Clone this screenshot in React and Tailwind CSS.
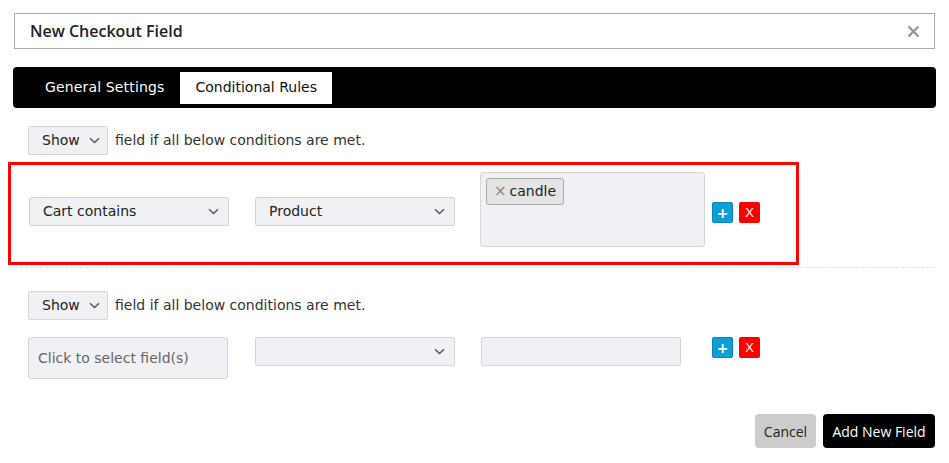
import React from "react";

const dv = "font-['DejaVu_Sans',Verdana,sans-serif]";
const os = "font-['Open_Sans',sans-serif]";

function Chevron() {
  return (
    <svg width="11" height="7" viewBox="0 0 11 7" className="shrink-0">
      <path d="M1 1.2 L5.5 5.5 L10 1.2" fill="none" stroke="#555" strokeWidth="1.5" />
    </svg>
  );
}

function Select({ value, className = "", pad = "pl-[13px] pr-[9px]" }) {
  return (
    <div
      className={`flex items-center justify-between h-[29px] bg-[#f0f1f4] border border-[#d3d5d9] rounded-[2px] text-[14px] text-[#222] ${pad} ${className}`}
    >
      <span>{value}</span>
      <Chevron />
    </div>
  );
}

function RowButtons() {
  return (
    <div className="flex gap-[6px]">
      <button className="w-[21px] h-[21px] rounded-[2px] bg-[#0a9fd6] border border-[#0a82b4] text-white text-[14px] leading-none flex items-center justify-center font-bold">
        +
      </button>
      <button className="w-[21px] h-[21px] rounded-[2px] bg-[#ff0000] text-white text-[13px] leading-none flex items-center justify-center font-['Liberation_Sans',Arial,sans-serif]">
        X
      </button>
    </div>
  );
}

function ShowLine() {
  return (
    <div className="flex items-center gap-[7px] pl-[28px]">
      <Select value="Show" className="w-[80px]" pad="pl-[13px] pr-[7px]" />
      <span className="text-[14px] text-[#333]">field if all below conditions are met.</span>
    </div>
  );
}

export default function App() {
  return (
    <div className={`w-[949px] h-[463px] bg-white ${dv} overflow-hidden`}>
      <div className="mx-[14px] mt-[13px] h-[36px] border border-[#aaa] flex items-center justify-between pl-[15px] pr-[14px]">
        <span className={`${os} text-[16px] font-semibold text-[#222]`}>New Checkout Field</span>
        <svg width="13" height="13" viewBox="0 0 13 13">
          <path d="M1.5 1.5 L11.5 11.5 M11.5 1.5 L1.5 11.5" stroke="#999" strokeWidth="2.4" />
        </svg>
      </div>

      <div className="mx-[13px] mt-[18px] h-[41px] bg-black rounded-[4px] flex items-center pl-[31px] gap-[15px] text-[14px]">
        <div className="text-white px-[1px] tracking-[0.15px]">General Settings</div>
        <div className="bg-white text-[#111] h-[32px] px-[15px] flex items-center">Conditional Rules</div>
      </div>

      <div className="mt-[18px]">
        <ShowLine />
      </div>

      <div className="ml-[8px] mt-[7px] w-[791px] border-[3px] border-[#ff0000] pt-[7px] pb-[15px] pl-[18px] flex items-start">
        <Select value="Cart contains" className="w-[200px] mt-[25px]" />
        <Select value="Product" className="w-[200px] ml-[26px] mt-[25px]" />
        <div className="ml-[25px] w-[225px] h-[75px] bg-[#f0f1f4] border border-[#d3d5d9] rounded-[3px] p-[5px]">
          <div className="inline-flex items-center h-[27px] px-[7px] bg-[#e4e4e4] border border-[#aaa] rounded-[3px] text-[14px] text-[#222]">
            <span className="text-[#888] mr-[3px] text-[15px]">×</span>candle
          </div>
        </div>
        <div className="ml-[7px] mt-[30px]">
          <RowButtons />
        </div>
      </div>

      <div className="mx-[15px] mt-[2px] border-t border-dashed border-[#e2e2e2]" />

      <div className="mt-[23px]">
        <ShowLine />
      </div>

      <div className="mt-[17px] pl-[28px] flex items-start">
        <div className="w-[200px] h-[42px] bg-[#f0f1f4] border border-[#d3d5d9] rounded-[3px] flex items-center pl-[9px] text-[14px] text-[#666]">
          Click to select field(s)
        </div>
        <Select value="" className="w-[200px] ml-[27px]" />
        <div className="w-[200px] h-[29px] ml-[26px] bg-[#f0f1f4] border border-[#d3d5d9] rounded-[2px]" />
        <div className="ml-[31px]">
          <RowButtons />
        </div>
      </div>

      <div className={`mt-[35px] pr-[14px] flex justify-end gap-[7px] ${os} text-[14px]`}>
        <button className="h-[34px] w-[61px] bg-[#cccccc] rounded-[4px] text-[#222]">Cancel</button>
        <button className="h-[34px] w-[112px] bg-black rounded-[4px] text-white">Add New Field</button>
      </div>
    </div>
  );
}
